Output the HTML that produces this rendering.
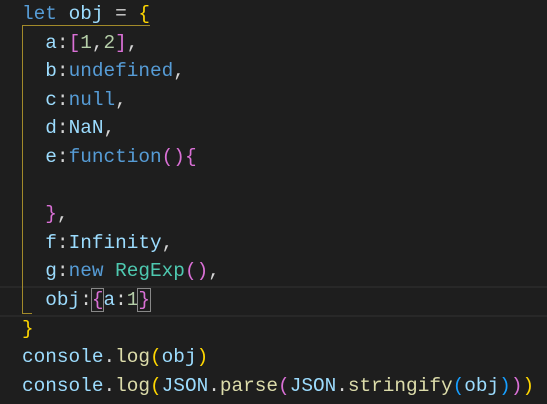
<!DOCTYPE html>
<html><head><style>
body{margin:0;background:#1e1e1e;width:547px;height:404px;overflow:hidden;position:relative}
pre{margin:0;position:absolute;left:22px;top:0;font-family:"Liberation Mono",monospace;font-size:19.4px;line-height:28.6px;color:#d4d4d4}
.k{color:#569cd6}.v{color:#9cdcfe}.y{color:#ffd700}.p{color:#da70d6}.n{color:#b5cea8}.f{color:#dcdcaa}.t{color:#4ec9b0}.b{color:#179fff}
.hl{position:absolute;left:0;right:0;top:286px;height:27px;border-top:2px solid #282828;border-bottom:2px solid #282828}
.g{position:absolute;left:22px;top:25px;width:1px;height:289px;background:#a28a2a}
.gt{position:absolute;left:22px;top:25px;width:128px;height:1px;background:#a28a2a}
.gb{position:absolute;left:22px;top:313px;width:10px;height:1px;background:#a28a2a}
.bx{outline:1px solid #888;}
</style></head><body>
<div class="hl"></div><div class="g"></div><div class="gt"></div><div class="gb"></div>
<pre><span class="k">let</span> <span class="v">obj</span> = <span class="y">{</span>
  <span class="v">a</span>:<span class="p">[</span><span class="n">1</span>,<span class="n">2</span><span class="p">]</span>,
  <span class="v">b</span>:<span class="k">undefined</span>,
  <span class="v">c</span>:<span class="k">null</span>,
  <span class="v">d</span>:<span class="v">NaN</span>,
  <span class="v">e</span>:<span class="k">function</span><span class="p">()</span><span class="p">{</span>

  <span class="p">}</span>,
  <span class="v">f</span>:<span class="v">Infinity</span>,
  <span class="v">g</span>:<span class="k">new</span> <span class="t">RegExp</span><span class="p">()</span>,
  <span class="v">obj</span>:<span class="p bx">{</span><span class="v">a</span>:<span class="n">1</span><span class="p bx">}</span>
<span class="y">}</span>
<span class="v">console</span>.<span class="f">log</span><span class="y">(</span><span class="v">obj</span><span class="y">)</span>
<span class="v">console</span>.<span class="f">log</span><span class="y">(</span><span class="v">JSON</span>.<span class="f">parse</span><span class="p">(</span><span class="v">JSON</span>.<span class="f">stringify</span><span class="b">(</span><span class="v">obj</span><span class="b">)</span><span class="p">)</span><span class="y">)</span></pre>
</body></html>
